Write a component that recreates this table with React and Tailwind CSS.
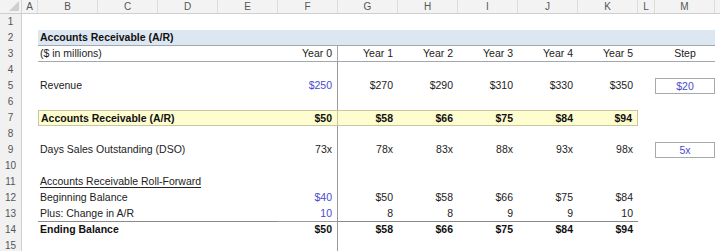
const GRID = 'grid grid-cols-[22px_16px_60px_60px_60px_60px_60px_60px_60px_60px_60px_60px_17px_60px]';
const LETTERS = ['A', 'B', 'C', 'D', 'E', 'F', 'G', 'H', 'I', 'J', 'K', 'L', 'M'];

const rows = [
    { n: 1 },
    { n: 2, band: true },
    { n: 3, label: '($ in millions)', vals: ['Year 0', 'Year 1', 'Year 2', 'Year 3', 'Year 4', 'Year 5'], step: 'Step', rule: true },
    { n: 4 },
    { n: 5, label: 'Revenue', vals: ['$250', '$270', '$290', '$310', '$330', '$350'], blue0: true, step: '$20', box: true },
    { n: 6 },
    { n: 7, label: 'Accounts Receivable (A/R)', vals: ['$50', '$58', '$66', '$75', '$84', '$94'], bold: true, yellow: true },
    { n: 8 },
    { n: 9, label: 'Days Sales Outstanding (DSO)', vals: ['73x', '78x', '83x', '88x', '93x', '98x'], step: '5x', box: true },
    { n: 10 },
    { n: 11, label: 'Accounts Receivable Roll-Forward', underline: true },
    { n: 12, label: 'Beginning Balance', vals: ['$40', '$50', '$58', '$66', '$75', '$84'], blue0: true },
    { n: 13, label: 'Plus: Change in A/R', vals: ['10', '8', '8', '9', '9', '10'], blue0: true, total: true },
    { n: 14, label: 'Ending Balance', vals: ['$50', '$58', '$66', '$75', '$84', '$94'], bold: true },
    { n: 15 },
];

function RowNum({ n }) {
    return (
        <div className="h-4 bg-[#f1f1f1] border-r border-[#cfcfcf] text-[#555] text-[10px] leading-4 text-center">{n}</div>
    );
}

function Row({ r }) {
    if (r.band) {
        return (
            <div className={GRID}>
                <RowNum n={r.n} />
                <div />
                <div className="col-span-12 h-4 bg-[#dde7f2] border-b border-[#a3a8ae] px-[2px] leading-[15px] font-bold text-[#111]">
                    Accounts Receivable (A/R)
                </div>
            </div>
        );
    }
    const vals = r.vals || ['', '', '', '', '', ''];
    const below = r.n >= 3;
    return (
        <div className={GRID}>
            <RowNum n={r.n} />
            <div />
            <div className={
                'col-span-4 h-4 px-[2px] leading-[15px] whitespace-nowrap ' +
                (r.bold ? 'font-bold text-[#111] ' : 'text-[#222] ') +
                (r.rule ? 'border-b border-[#a3a8ae] ' : '') +
                (r.total ? 'border-b border-[#8a8a8a] ' : '') +
                (r.yellow ? 'bg-[#fefdcf] border-y border-l border-[#c9c7a2] ' : '')
            }>
                <span className={r.underline ? 'underline underline-offset-2' : ''}>{r.label || ''}</span>
            </div>
            {vals.map((v, i) => (
                <div key={i} className={
                    'h-4 pr-[5px] text-right leading-[15px] whitespace-nowrap ' +
                    (i === 0 && below ? 'border-r border-[#9a9a9a] ' : '') +
                    (i === 0 && r.blue0 ? 'text-[#4a4ad0] ' : r.bold ? 'text-[#111] ' : 'text-[#222] ') +
                    (r.bold ? 'font-bold ' : '') +
                    (r.rule ? 'border-b border-[#a3a8ae] ' : '') +
                    (r.total ? 'border-b border-[#8a8a8a] ' : '') +
                    (r.yellow ? 'bg-[#fefdcf] border-y border-[#c9c7a2] ' : '') +
                    (r.yellow && i === 5 ? 'border-r ' : '')
                }>{v}</div>
            ))}
            <div className={'h-4 ' + (r.rule ? 'border-b border-[#a3a8ae]' : '')} />
            <div className={
                'h-4 text-center leading-[15px] ' +
                (r.rule ? 'border-b border-[#a3a8ae] text-[#222] ' : '') +
                (r.box ? 'border border-[#a9a9a9] text-[#4a4ad0] leading-[14px] ' : '')
            }>{r.step || ''}</div>
        </div>
    );
}

export default function App() {
    return (
        <div className="w-[720px] h-[251px] overflow-hidden bg-white text-[10.5px] text-[#222]" style={{ fontFamily: "'Liberation Sans', Arial, sans-serif" }}>
            {/* column letters */}
            <div className={GRID + ' h-[14px] bg-[#f3f3f3] border-b border-[#cfcfcf]'}>
                <div className="relative border-r border-[#d6d6d6]">
                    <svg className="absolute right-[2px] bottom-[2px]" width="10" height="10" viewBox="0 0 10 10">
                        <polygon points="10,0 10,10 0,10" fill="#cfcfcf" />
                    </svg>
                </div>
                {LETTERS.map((c) => (
                    <div key={c} className="text-center text-[10px] leading-[13px] text-[#555] border-r border-[#dcdcdc]">{c}</div>
                ))}
            </div>
            {rows.map((r) => <Row key={r.n} r={r} />)}
        </div>
    );
}
